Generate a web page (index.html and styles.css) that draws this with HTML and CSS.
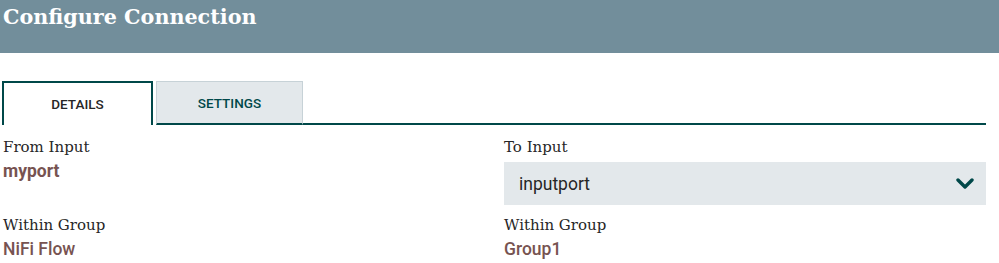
FILE: index.html
```html
<!DOCTYPE html>
<html lang="en">
<head>
  <meta charset="UTF-8" />
  <title>Configure Connection</title>
  <link rel="stylesheet" href="styles.css">
</head>
<body>
  <div class="dialog-header">Configure Connection</div>

  <div class="tabs">
    <div class="tab selected">Details</div>
    <div class="tab">Settings</div>
    <div class="tab-rest"></div>
  </div>

  <div class="details">
    <div class="setting-name">From Input</div>
    <div class="setting-name">To Input</div>
    <div class="setting-value">myport</div>
    <div class="combo">
      <span>inputport</span>
      <svg class="chevron" width="18" height="12" viewBox="0 0 18 12">
        <polyline points="2,2 9,9 16,2" fill="none" stroke="#004849" stroke-width="3.4" stroke-linecap="round" stroke-linejoin="round"/>
      </svg>
    </div>
    <div class="setting-name">Within Group</div>
    <div class="setting-name">Within Group</div>
    <div class="setting-value light">NiFi Flow</div>
    <div class="setting-value light">Group1</div>
  </div>
</body>
</html>
```

FILE: styles.css
```css
html, body {
  margin: 0;
  padding: 0;
  background: #fff;
  color: #262626;
}

.dialog-header {
  height: 53px;
  background: #728e9b;
  color: #fff;
  font-family: 'DejaVu Serif', serif;
  font-weight: bold;
  font-size: 20.7px;
  line-height: 34px;
  padding-left: 3px;
  box-sizing: border-box;
}

.tabs {
  display: flex;
  margin: 28px 13px 0 2px;
  height: 44px;
}

.tab {
  width: 147px;
  box-sizing: border-box;
  display: flex;
  align-items: center;
  justify-content: center;
  font-family: Roboto, sans-serif;
  font-weight: 500;
  font-size: 13.5px;
  text-transform: uppercase;
  color: #004849;
  background: #e3e8eb;
  border: 1px solid #c7d2d7;
  border-bottom: 2px solid #004849;
  margin-left: 3px;
}

.tab.selected {
  width: 151px;
  margin-left: 0;
  background: #fff;
  color: #262626;
  border: 2px solid #004849;
  border-bottom: none;
}

.tab-rest {
  flex: 1;
  border-bottom: 2px solid #004849;
}

.details {
  display: grid;
  grid-template-columns: 501px 482px;
  padding: 12px 0 0 3px;
  align-items: start;
}

.setting-name {
  font-family: 'DejaVu Serif', serif;
  font-size: 15px;
  line-height: 20px;
  color: #262626;
}

.setting-value {
  font-family: Roboto, sans-serif;
  font-weight: bold;
  font-size: 17.5px;
  line-height: 22px;
  color: #775351;
  margin-top: 3px;
}

.setting-value.light {
  font-weight: 500;
  margin-top: 3px;
}

.combo {
  height: 43px;
  margin: 5px 0 10px;
  background: #e3e8eb;
  display: flex;
  align-items: center;
  justify-content: space-between;
  padding: 0 12px 0 15px;
  font-family: Roboto, sans-serif;
  font-size: 17.5px;
  color: #262626;
}

.chevron {
  margin-top: 1px;
}
```
